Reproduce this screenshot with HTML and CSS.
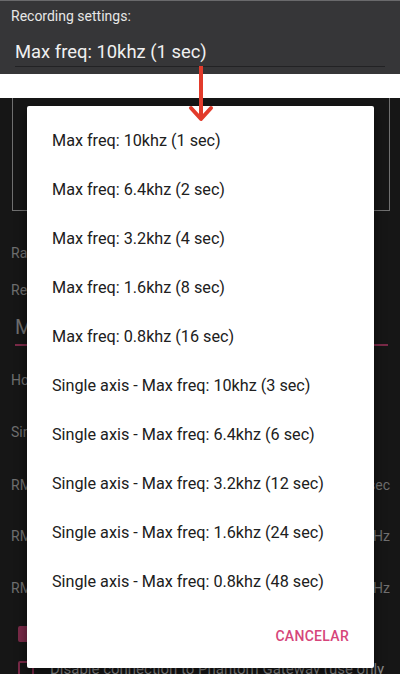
FILE: index.html
```html
<!DOCTYPE html>
<html>
<head>
<meta charset="utf-8">
<link rel="stylesheet" href="styles.css">
</head>
<body>
<div class="screen">
  <header class="top">
    <div class="top-label">Recording settings:</div>
    <div class="top-field">Max freq: 10khz (1 sec)</div>
  </header>
  <div class="band"></div>
  <main class="bg">
    <div class="box"></div>
    <div class="row r1">Range settings</div>
    <div class="row r2">Recording mode</div>
    <div class="row big">Max freq: 10khz (1 sec)</div>
    <div class="row r3">Hours between recordings</div>
    <div class="row r4">Single axis recording</div>
    <div class="row r5"><span>RMS velocity alarm</span><span>mm/sec</span></div>
    <div class="row r6"><span>RMS low filter</span><span>Hz</span></div>
    <div class="row r7"><span>RMS high filter</span><span>Hz</span></div>
    <div class="check c1"><span class="cb on"></span><span>Enable alarms</span></div>
    <div class="check c2"><span class="cb"></span><span>Disable connection to Phantom Gateway (use only</span></div>
  </main>

  <div class="dialog">
    <ul class="options">
      <li>Max freq: 10khz (1 sec)</li>
      <li>Max freq: 6.4khz (2 sec)</li>
      <li>Max freq: 3.2khz (4 sec)</li>
      <li>Max freq: 1.6khz (8 sec)</li>
      <li>Max freq: 0.8khz (16 sec)</li>
      <li>Single axis - Max freq: 10khz (3 sec)</li>
      <li>Single axis - Max freq: 6.4khz (6 sec)</li>
      <li>Single axis - Max freq: 3.2khz (12 sec)</li>
      <li>Single axis - Max freq: 1.6khz (24 sec)</li>
      <li>Single axis - Max freq: 0.8khz (48 sec)</li>
    </ul>
    <div class="actions"><span class="cancel">CANCELAR</span></div>
  </div>

  <svg class="arrow" width="30" height="60" viewBox="0 0 30 60">
    <line x1="15" y1="0" x2="15" y2="52" stroke="#e23b2b" stroke-width="4"/>
    <polyline points="5,42 15,53 25,42" fill="none" stroke="#e23b2b" stroke-width="4" stroke-linecap="round" stroke-linejoin="round"/>
  </svg>
</div>
</body>
</html>
```

FILE: styles.css
```css
* { box-sizing: border-box; }
html, body { margin: 0; padding: 0; }
body {
  font-family: Roboto, "Noto Sans", sans-serif;
  background: #161616;
  width: 400px;
  height: 674px;
  overflow: hidden;
}
.screen {
  position: relative;
  width: 400px;
  height: 674px;
  overflow: hidden;
}
.top {
  background: #363638;
  height: 74px;
  padding: 6px 0 0 11px;
  border-top: 1px solid #6a6a6c;
}
.top-label {
  color: #e6e6e6;
  font-size: 14px;
  line-height: 18px;
}
.top-field {
  color: #f0f0f0;
  font-size: 18.4px;
  line-height: 26px;
  margin: 14px 15px 0 4px;
  padding-bottom: 1px;
  border-bottom: 1px solid #222224;
}
.band {
  background: #ffffff;
  height: 24px;
}
.bg {
  background: #161616;
  height: 576px;
  color: #6f6f6f;
  font-size: 14px;
}
.box {
  margin: 0 10px 0 12px;
  height: 113px;
  border: 1px solid #707070;
  border-top: none;
}
.row {
  display: flex;
  justify-content: space-between;
  padding: 0 10px 0 11px;
  height: 20px;
  line-height: 20px;
  white-space: nowrap;
}
.r1 { margin-top: 32px; }
.r2 { margin-top: 17px; }
.big {
  margin: 14px 12px 0 15px;
  padding: 0 0 6px 0;
  height: 32px;
  font-size: 20px;
  line-height: 26px;
  border-bottom: 2px solid #7a2a48;
}
.r3 { margin-top: 24px; }
.r4 { margin-top: 32px; }
.r5 { margin-top: 33px; }
.r6 { margin-top: 31px; }
.r7 { margin-top: 32px; }
.check {
  display: flex;
  align-items: center;
  gap: 16px;
  padding-left: 18px;
  height: 20px;
  white-space: nowrap;
}
.c1 { margin-top: 26px; }
.c2 { margin-top: 15px; color: #8a8a8a; font-size: 15px; }
.cb {
  width: 16px;
  height: 16px;
  border: 2px solid #7a2a48;
  border-radius: 2px;
  flex: none;
}
.cb.on { background: #7a2a48; }

.dialog {
  position: absolute;
  left: 27px;
  top: 106px;
  width: 347px;
  height: 562px;
  background: #ffffff;
  border-radius: 2px;
  box-shadow: 0 4px 12px rgba(0,0,0,0.5);
}
.options {
  list-style: none;
  margin: 0;
  padding: 10px 0 0 0;
}
.options li {
  height: 49px;
  line-height: 49px;
  padding-left: 25px;
  font-size: 16.2px;
  color: #202020;
  white-space: nowrap;
}
.actions {
  display: flex;
  justify-content: flex-end;
  padding: 20px 25px 0 0;
}
.cancel {
  color: #d6457a;
  font-size: 14px;
  font-weight: 500;
  letter-spacing: 0.3px;
  line-height: 20px;
}
.arrow {
  position: absolute;
  left: 186px;
  top: 66px;
}
```
